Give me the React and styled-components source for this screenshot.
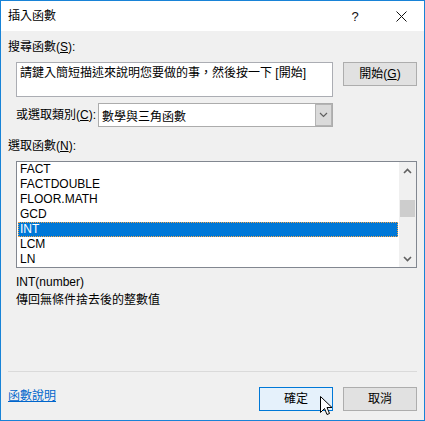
import React from 'react';
import styled, { createGlobalStyle } from 'styled-components';

const GlobalStyle = createGlobalStyle`
  body {
    margin: 0;
    font-family: "Liberation Sans", "Noto Sans CJK TC", sans-serif;
    font-size: 12px;
    color: #000;
  }
`;

// Ventana del diálogo
const Window = styled.div`
  position: relative;
  width: 425px;
  height: 421px;
  box-sizing: border-box;
  border: 1px solid #1883d7;
  display: flex;
  flex-direction: column;
  background: #f0f0f0;
`;

const TitleBar = styled.div`
  height: 30px;
  background: #fff;
  display: flex;
  align-items: center;
  padding-left: 7px;
`;

const Title = styled.div`
  flex: 1;
  line-height: 16px;
`;

const TitleButton = styled.div`
  width: 46px;
  height: 30px;
  display: flex;
  align-items: center;
  justify-content: center;
  font-size: 13px;
  color: #111;
`;

const Body = styled.div`
  flex: 1;
  display: flex;
  flex-direction: column;
  padding: 8px 7px 9px 7px;
`;

const Label = styled.div`
  line-height: 16px;
  margin-top: ${p => p.$top || 0}px;
  margin-left: ${p => p.$indent || 0}px;
  white-space: nowrap;
`;

const Key = styled.span`
  text-decoration: underline;
`;

const Row = styled.div`
  display: flex;
  align-items: ${p => p.$align || 'flex-start'};
  margin-top: ${p => p.$top || 0}px;
  margin-left: 8px;
`;

const SearchBox = styled.div`
  width: 317px;
  height: 35px;
  box-sizing: border-box;
  border: 1px solid #abadb3;
  background: #fff;
  padding: 2px 3px;
  line-height: 16px;
`;

const Button = styled.div`
  width: ${p => p.$w || 74}px;
  height: 24px;
  box-sizing: border-box;
  margin-left: ${p => p.$gap || 0}px;
  border: 1px solid ${p => (p.$hot ? '#0078d7' : '#adadad')};
  background: ${p => (p.$hot ? '#e5f1fb' : '#e1e1e1')};
  display: flex;
  align-items: center;
  justify-content: center;
  line-height: 16px;
`;

const Select = styled.div`
  width: 235px;
  height: 24px;
  box-sizing: border-box;
  margin-left: 2px;
  border: 1px solid #acacac;
  background: #fff;
  display: flex;
  align-items: stretch;
`;

const SelectText = styled.div`
  flex: 1;
  padding-left: 3px;
  display: flex;
  align-items: center;
`;

const DropButton = styled.div`
  width: 17px;
  box-sizing: border-box;
  border: 1px solid #b4b4b4;
  background: #dadada;
  display: flex;
  align-items: center;
  justify-content: center;
`;

const ListBox = styled.div`
  margin-top: 7px;
  margin-left: 8px;
  width: 401px;
  height: 107px;
  box-sizing: border-box;
  border: 1px solid #828790;
  background: #fff;
  display: flex;
`;

const Items = styled.div`
  flex: 1;
  padding: 0 1px;
`;

const Item = styled.div`
  height: 15px;
  line-height: 15px;
  padding-left: 2px;
  box-sizing: border-box;
  background: ${p => (p.$selected ? '#0078d7' : 'transparent')};
  color: ${p => (p.$selected ? '#fff' : '#000')};
  outline: ${p => (p.$selected ? '1px dotted #f4a64a' : 'none')};
  outline-offset: -1px;
`;

const ScrollBar = styled.div`
  width: 17px;
  background: #f0f0f0;
  display: flex;
  flex-direction: column;
`;

const ScrollArrow = styled.div`
  height: 17px;
  display: flex;
  align-items: center;
  justify-content: center;
`;

const Track = styled.div`
  flex: 1;
`;

const Thumb = styled.div`
  margin: 21px 1px 0 1px;
  height: 17px;
  background: #cdcdcd;
`;

const Spacer = styled.div`
  flex: 1;
`;

const Separator = styled.div`
  height: 1px;
  background: #dadada;
  margin: 0 0 15px 0;
`;

const Footer = styled.div`
  display: flex;
  align-items: flex-start;
`;

const HelpLink = styled.a`
  flex: 1;
  margin-top: 1px;
  line-height: 16px;
  color: #0066cc;
  text-decoration: underline;
  cursor: pointer;
`;

const Pointer = styled.svg`
  position: absolute;
  left: 319px;
  top: 395px;
`;

const Chevron = ({ up }) => (
  <svg width="9" height="6" viewBox="0 0 9 6">
    <path
      d={up ? 'M1 5 L4.5 1.5 L8 5' : 'M1 1 L4.5 4.5 L8 1'}
      fill="none"
      stroke="#606060"
      strokeWidth="1.6"
    />
  </svg>
);

const functions = ['FACT', 'FACTDOUBLE', 'FLOOR.MATH', 'GCD', 'INT', 'LCM', 'LN'];

const App = () => {
  return (
    <>
      <GlobalStyle />
      <Window>
        <TitleBar>
          <Title>插入函數</Title>
          <TitleButton>?</TitleButton>
          <TitleButton>
            <svg width="11" height="11" viewBox="0 0 11 11">
              <path d="M0.5 0.5 L10.5 10.5 M10.5 0.5 L0.5 10.5" stroke="#111" strokeWidth="1" />
            </svg>
          </TitleButton>
        </TitleBar>

        <Body>
          <Label>
            搜尋函數(<Key>S</Key>):
          </Label>
          <Row $top={7}>
            <SearchBox>請鍵入簡短描述來說明您要做的事，然後按一下 [開始]</SearchBox>
            <Button $gap={10}>
              開始(<Key>G</Key>)
            </Button>
          </Row>

          <Row $top={6} $align="center">
            <Label>
              或選取類別(<Key>C</Key>):
            </Label>
            <Select>
              <SelectText>數學與三角函數</SelectText>
              <DropButton>
                <svg width="9" height="6" viewBox="0 0 9 6">
                  <path d="M1 1 L4.5 4.5 L8 1" fill="none" stroke="#606060" strokeWidth="1.2" />
                </svg>
              </DropButton>
            </Select>
          </Row>

          <Label $top={11}>
            選取函數(<Key>N</Key>):
          </Label>
          <ListBox>
            <Items>
              {functions.map(name => (
                <Item key={name} $selected={name === 'INT'}>
                  {name}
                </Item>
              ))}
            </Items>
            <ScrollBar>
              <ScrollArrow>
                <Chevron up />
              </ScrollArrow>
              <Track>
                <Thumb />
              </Track>
              <ScrollArrow>
                <Chevron />
              </ScrollArrow>
            </ScrollBar>
          </ListBox>

          <Label $top={6} $indent={8}>INT(number)</Label>
          <Label $top={2} $indent={8}>傳回無條件捨去後的整數值</Label>

          <Spacer />
          <Separator />
          <Footer>
            <HelpLink>函數說明</HelpLink>
            <Button $hot>確定</Button>
            <Button $gap={10}>取消</Button>
          </Footer>
        </Body>

        <Pointer width="13" height="20" viewBox="0 0 13 20">
          <path
            d="M0.5 0.5 L0.5 16.5 L4.5 12.5 L7 18.5 L9.5 17.5 L7 11.5 L12 11.5 Z"
            fill="#fff"
            stroke="#000"
            strokeWidth="1"
            strokeLinejoin="round"
          />
        </Pointer>
      </Window>
    </>
  );
};

export default App;
